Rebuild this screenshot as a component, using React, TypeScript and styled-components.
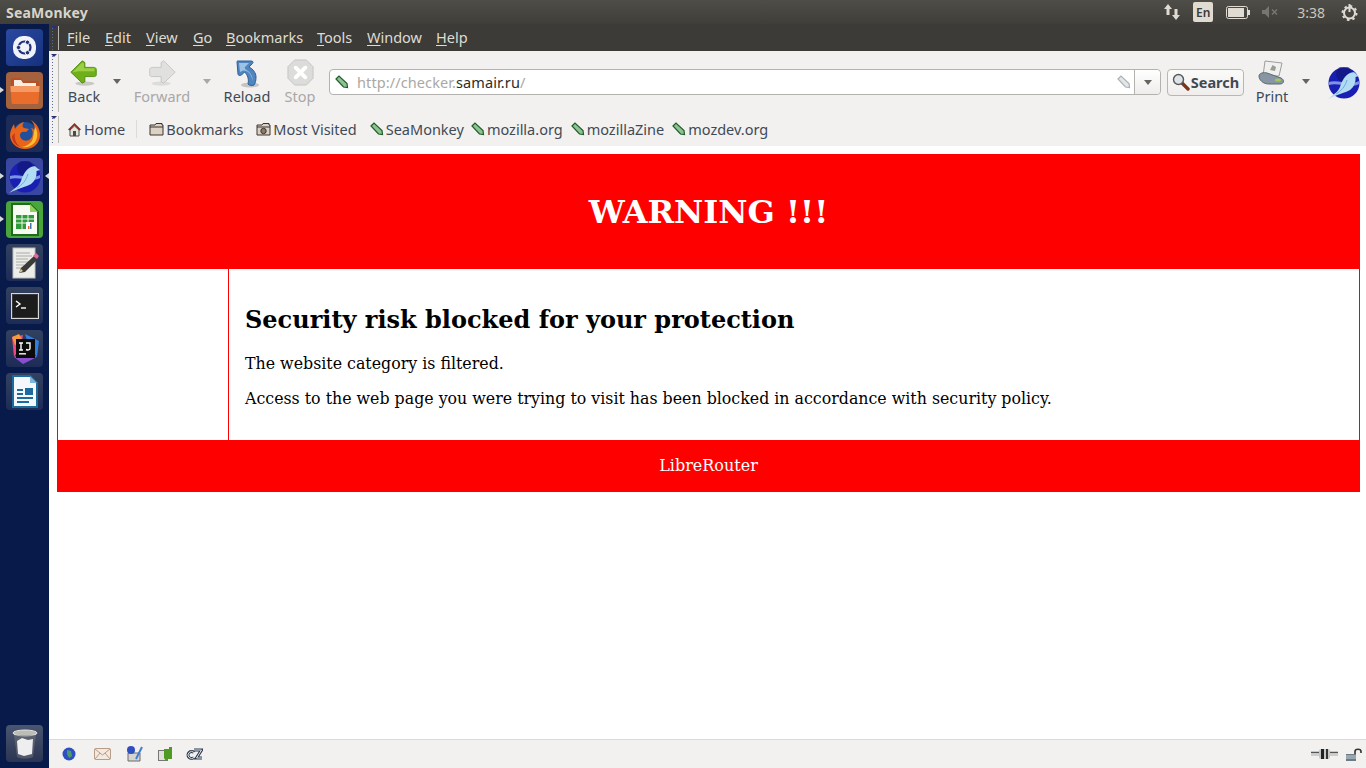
import React from "react";
import styled, { createGlobalStyle } from "styled-components";

const UI_FONT = `"Noto Sans", "Open Sans", sans-serif`;

const Global = createGlobalStyle`
  html, body { margin: 0; padding: 0; height: 100%; overflow: hidden; background: #fff; }
  #root { height: 768px; }
`;

const Screen = styled.div`
  width: 1366px;
  height: 768px;
  display: flex;
  flex-direction: column;
  font-family: ${UI_FONT};
`;
const Panel = styled.div`
  height: 24px;
  flex: none;
  display: flex;
  align-items: center;
  justify-content: space-between;
  background: linear-gradient(#4f4d47, #3f3e39);
  color: #dfdbd2;
`;
const WindowTitle = styled.span`
  margin-left: 6px;
  font-size: 14px;
  font-weight: 700;
  letter-spacing: 0.2px;
  color: #d8d4cb;
`;
const Indicators = styled.div`
  display: flex;
  align-items: center;
  padding-right: 8px;
`;
const LangBadge = styled.span`
  width: 20px;
  height: 20px;
  margin: 0 13px 0 12px;
  background: #dfdbd2;
  border-radius: 2px;
  color: #3c3b37;
  font-size: 12px;
  font-weight: 600;
  display: flex;
  align-items: center;
  justify-content: center;
`;
const Clock = styled.span`
  margin: 0 16px 0 17px;
  font-size: 14px;
  color: #c9c6bd;
`;
const MuteSlot = styled.span`
  display: flex;
  margin-left: 12px;
`;
const Body = styled.div`
  flex: 1;
  display: flex;
  min-height: 0;
`;
const Launcher = styled.div`
  width: 49px;
  flex: none;
  background: #071a49;
  padding-top: 5px;
  padding-bottom: 6px;
  box-sizing: border-box;
  display: flex;
  flex-direction: column;
  align-items: flex-start;
  gap: 6px;
`;
const Tile = styled.div<{ $bg: string; $running?: boolean; $active?: boolean }>`
  width: 37px;
  height: 37px;
  margin-left: 6px;
  border-radius: 4px;
  background: ${(p) => p.$bg};
  display: flex;
  align-items: center;
  justify-content: center;
  position: relative;
  flex: none;
  ${(p) =>
    p.$running &&
    `&::before { content: ""; position: absolute; left: -6px; top: 15px; border: 3px solid transparent; border-left: 4px solid #d9d9d9; }`}
  ${(p) =>
    p.$active &&
    `&::after { content: ""; position: absolute; right: -6px; top: 15px; border: 3px solid transparent; border-right: 4px solid #d9d9d9; }`}
`;
const LauncherSpacer = styled.div`
  flex: 1;
`;
const Browser = styled.div`
  flex: 1;
  display: flex;
  flex-direction: column;
  min-width: 0;
`;
const MenuBar = styled.div`
  height: 27px;
  flex: none;
  display: flex;
  align-items: center;
  background: #3c3b37;
  color: #dfdbd2;
  font-size: 14.5px;
`;
const Grip = styled.div<{ $h: number }>`
  width: 8px;
  height: ${(p) => p.$h}px;
  margin-left: 2px;
  flex: none;
  box-sizing: border-box;
  border-right: 1px solid #bbb9b4;
  background-image: radial-gradient(circle, #5c6a9a 0.7px, transparent 0.8px);
  background-size: 3px 3px;
  background-position: 0 4px;
  background-repeat: repeat-y;
  position: relative;
  &::before {
    content: "";
    position: absolute;
    left: 0;
    top: 0;
    border: 3px solid transparent;
    border-top: 3px solid #2b2f7a;
  }
`;
const MenuItem = styled.span<{ $w: number }>`
  width: ${(p) => p.$w}px;
  flex: none;
  & u {
    text-underline-offset: 2px;
  }
`;
const MenuList = styled.div`
  display: flex;
  margin-left: 8px;
  margin-top: -1px;
`;
const Chrome = styled.div`
  flex: none;
  background: #f2f1f0;
  color: #3c3b37;
`;
const NavBar = styled.div`
  height: 64px;
  display: flex;
  align-items: center;
`;
const ToolButton = styled.div<{ $w: number; $off?: boolean; $gap?: number }>`
  width: ${(p) => p.$w}px;
  margin-left: ${(p) => p.$gap ?? 0}px;
  margin-top: -2px;
  flex: none;
  height: 46px;
  display: flex;
  flex-direction: column;
  align-items: center;
  justify-content: space-between;
  font-size: 14.5px;
  line-height: 17px;
  color: ${(p) => (p.$off ? "#a9a8a6" : "#3f4a56")};
`;
const DropArrow = styled.span<{ $off?: boolean; $gap: number }>`
  width: 12px;
  margin-left: ${(p) => p.$gap}px;
  flex: none;
  display: flex;
  justify-content: center;
  &::after {
    content: "";
    border: 4px solid transparent;
    border-top: 5px solid ${(p) => (p.$off ? "#a8a8a8" : "#66645f")};
    margin-top: 1px;
  }
`;
const UrlBar = styled.div`
  width: 832px;
  height: 26px;
  margin-left: 4px;
  margin-top: -2px;
  flex: none;
  box-sizing: border-box;
  display: flex;
  align-items: center;
  padding-left: 5px;
  background: #fff;
  border: 1px solid #b4b2ae;
  border-radius: 4px;
  font-size: 14.5px;
`;
const UrlText = styled.span`
  flex: 1;
  margin-left: 8px;
  letter-spacing: 0.1px;
  color: #aaa8a4;
  & b {
    font-weight: 400;
    color: #2d2c2a;
  }
`;
const UrlDrop = styled.span`
  width: 25px;
  height: 24px;
  border-left: 1px solid #b4b2ae;
  margin-left: 3px;
  display: flex;
  align-items: center;
  justify-content: center;
  background: linear-gradient(#fff, #eeedeb);
  border-radius: 0 4px 4px 0;
  &::after {
    content: "";
    border: 4px solid transparent;
    border-top: 5px solid #66645f;
    margin-top: 5px;
  }
`;
const SearchButton = styled.div`
  width: 77px;
  height: 27px;
  margin-left: 6px;
  margin-top: -1px;
  padding-bottom: 1px;
  flex: none;
  box-sizing: border-box;
  display: flex;
  align-items: center;
  justify-content: center;
  gap: 1px;
  border: 1px solid #b9b7b2;
  border-radius: 4px;
  background: linear-gradient(#fbfbfa, #efeeec);
  font-size: 14.5px;
  font-weight: 700;
  color: #3f4a56;
`;
const LogoSlot = styled.span`
  margin-left: 16px;
  display: flex;
  margin-top: -1px;
`;
const BookmarkBar = styled.div`
  height: 31px;
  box-sizing: border-box;
  padding-bottom: 3px;
  display: flex;
  align-items: center;
  font-size: 14.5px;
  color: #3f4a56;
`;
const Bookmark = styled.span<{ $gap?: number }>`
  display: flex;
  align-items: center;
  gap: 2px;
  margin-left: ${(p) => p.$gap ?? 0}px;
  white-space: nowrap;
`;
const BarSeparator = styled.span`
  width: 1px;
  height: 18px;
  background: #dcdbd8;
  margin: 0 12px 0 11px;
`;
const PageArea = styled.div`
  flex: 1;
  min-height: 0;
  background: #fff;
  padding: 8px 6px 0 8px;
  font-family: "DejaVu Serif", serif;
`;
const Banner = styled.div`
  height: 115px;
  background: #f00;
  color: #fff;
  display: flex;
  align-items: center;
  justify-content: center;
  font-size: 32px;
  font-weight: 700;
`;
const Middle = styled.div`
  height: 171px;
  display: flex;
  box-sizing: border-box;
  border-left: 1px solid #f00;
  border-right: 1px solid #f00;
`;
const SideCell = styled.div`
  width: 170px;
  flex: none;
  border-right: 1px solid #f00;
`;
const Message = styled.div`
  padding: 34px 16px 0;
  color: #000;
`;
const Heading = styled.h2`
  margin: 0 0 17px;
  font-size: 24px;
  line-height: 34px;
  font-weight: 700;
`;
const Para = styled.p`
  margin: 0 0 16px;
  font-size: 15.82px;
  line-height: 19px;
`;
const Footer = styled.div`
  height: 52px;
  box-sizing: border-box;
  padding-bottom: 2px;
  background: #f00;
  color: #fff;
  font-size: 16px;
  display: flex;
  align-items: center;
  justify-content: center;
`;
const StatusBar = styled.div`
  height: 29px;
  flex: none;
  box-sizing: border-box;
  background: #f2f1f0;
  border-top: 1px solid #dcdad6;
  display: flex;
  align-items: center;
  justify-content: space-between;
  padding: 0 4px 0 13px;
`;
const StatusGroup = styled.div<{ $gap: number }>`
  display: flex;
  align-items: center;
  gap: ${(p) => p.$gap}px;
`;
const StatusSlot = styled.span<{ $w: number }>`
  width: ${(p) => p.$w}px;
  display: flex;
  align-items: center;
`;

const Pin = () => (
  <svg width="14" height="14" viewBox="0 0 14 14">
    <path d="M1 4 4 1 12 8.5 12.5 12.5 8.5 12Z" fill="#8fc492" stroke="#1f5c2a" strokeWidth="1.2" />
  </svg>
);
const GreyTag = () => (
  <svg width="14" height="14" viewBox="0 0 14 14">
    <path d="M1 4 4 1 12 8.5 12.5 12.5 8.5 12Z" fill="#e6e6e6" stroke="#a9b2ba" strokeWidth="1.2" />
  </svg>
);
const HomeIcon = () => (
  <svg width="15" height="15" viewBox="0 0 15 15">
    <path d="M7.5 1 1 7.5 2.5 8.5 7.5 3.5 12.5 8.5 14 7.5Z" fill="#8c2f22" />
    <path d="M3 8 7.5 4 12 8V14H3Z" fill="#e8e4dc" stroke="#4b4a46" />
    <rect x="6" y="9" width="3" height="5" fill="#4b4a46" />
  </svg>
);
const FolderIcon = ({ camera }: { camera?: boolean }) => (
  <svg width="15" height="14" viewBox="0 0 15 14">
    <path d="M1 3H6L7 1.5H13V3H14V13H1Z" fill="#dcd2c4" stroke="#3b3530" />
    <path d="M1 5H14" stroke="#3b3530" />
    {camera && <circle cx="7.5" cy="9" r="2.7" fill="#8a7b6c" stroke="#3b3530" />}
  </svg>
);
const BackArrow = () => (
  <svg width="28" height="29" viewBox="0 0 32 33">
    <ellipse cx="17" cy="28" rx="11" ry="2.5" fill="#c9c8c5" />
    <path d="M1 15 14 2 17 4V9.5H27C29 9.5 30 10.5 30 12V18C30 19.5 29 20 27 20H17V26L14 27.5Z" fill="#6fb01a" stroke="#4c8a0c" />
    <path d="M3 15 14 4 16 5V10.5H28V14H10Z" fill="#9bd045" />
  </svg>
);
const ForwardArrow = () => (
  <svg width="28" height="29" viewBox="0 0 32 33">
    <ellipse cx="15" cy="28" rx="11" ry="2.5" fill="#dddcda" />
    <path d="M31 15 18 2 15 4V9.5H5C3 9.5 2 10.5 2 12V18C2 19.5 3 20 5 20H15V26L18 27.5Z" fill="#e0e0df" stroke="#c2c2c1" />
  </svg>
);
const ReloadIcon = () => (
  <svg width="26" height="29" viewBox="0 0 26 29">
    <ellipse cx="16" cy="26" rx="9" ry="2.5" fill="#c4c3c0" />
    <path d="M3.5 2H17.5C19 2 19.5 3.5 18.5 4.5L15 8C19 10 22 14 22 18 22 21 21.5 24 20 26 17.5 27 15.5 26.5 14 25 15 21 14 16 10.5 13L7.5 16C6 17 4 16.5 4 15L3 3C3 2.5 3 2 3.5 2Z" fill="#4f86c0" stroke="#2e5f96" />
    <path d="M5 4H15L11 8C10 9.5 12 10.5 14 12 17 14.5 19 18 18.5 22 18 16 14 11 9 11.5L6 13Z" fill="#9cc3e6" />
  </svg>
);
const StopIcon = () => (
  <svg width="27" height="27" viewBox="0 0 28 28">
    <path d="M8 1H20L27 8V20L20 27H8L1 20V8Z" fill="#dcdcdb" stroke="#c4c4c3" />
    <path d="M9 9 19 19M19 9 9 19" stroke="#fff" strokeWidth="4" strokeLinecap="round" />
  </svg>
);
const Magnifier = () => (
  <svg width="18" height="18" viewBox="0 0 18 18">
    <path d="M9 9 16 16" stroke="#7c3418" strokeWidth="3.4" strokeLinecap="round" />
    <circle cx="6.5" cy="6.5" r="5" fill="#dfe3e6" stroke="#55585c" strokeWidth="1.4" />
  </svg>
);
const PrintIcon = () => (
  <svg width="30" height="28" viewBox="0 0 30 28">
    <path d="M8 2 25 4 22 17H6Z" fill="#f0f0ee" stroke="#9d9d9b" />
    <path d="M13 11 15.5 6 19 8 18 12Z" fill="#9a9a98" />
    <path d="M2 17C2 14 7 13 10 14L24 19C28 21 27 25 23 25H12C6 25 2 21 2 17Z" fill="#8896a3" stroke="#5e6973" />
    <ellipse cx="21" cy="21" rx="3" ry="1.5" fill="#9ccc55" />
  </svg>
);
const SeaMonkeyLogo = ({ size }: { size: number }) => (
  <svg width={size} height={size} viewBox="0 0 32 32">
    <circle cx="16" cy="16" r="15.5" fill="#1a1fb4" />
    <circle cx="16" cy="7" r="8" fill="#11156e" opacity="0.6" />
    <path d="M1 15C10 12 20 19 31 14V17C22 22 10 15 1 18Z" fill="#7d93e6" />
    <path d="M0 32C6 27 10 25 12 20 14 14 17 8 22 6 25 4.5 27 5 28 7L31 9 27.5 10C28 15 26 20 22 23 17 26 10 27 0 32Z" fill="#b2dcf4" />
    <path d="M8 27C13 24 17 20 19 13" fill="none" stroke="#6fa8d8" strokeWidth="1" />
  </svg>
);
const UbuntuLogo = () => (
  <svg width="27" height="27" viewBox="0 0 27 27">
    <rect x="2" y="2" width="23" height="23" rx="10" fill="#f1f3f8" />
    <circle cx="13.5" cy="13.5" r="6" fill="none" stroke="#1f3276" strokeWidth="2.2" />
    <circle cx="7.5" cy="13.5" r="2.2" fill="#1f3276" stroke="#f1f3f8" />
    <circle cx="16.5" cy="8.3" r="2.2" fill="#1f3276" stroke="#f1f3f8" />
    <circle cx="16.5" cy="18.7" r="2.2" fill="#1f3276" stroke="#f1f3f8" />
  </svg>
);
const FilesIcon = () => (
  <svg width="30" height="28" viewBox="0 0 30 28">
    <path d="M1 3C1 2 2 1 3 1H11L13 4H27C28 4 29 5 29 6V12H1Z" fill="#b94f22" />
    <path d="M4 3H11L13 6H26V10H4Z" fill="#f6efe6" />
    <path d="M0.5 9H29.5L28.5 25C28.5 26 28 27 27 27H3C2 27 1.5 26 1.5 25Z" fill="#ea6d2c" />
    <path d="M0.5 9H29.5L29.2 15H0.8Z" fill="#f59a62" />
  </svg>
);
const FirefoxIcon = () => (
  <svg width="32" height="32" viewBox="0 0 32 32">
    <circle cx="16" cy="16" r="12" fill="#20509c" />
    <path d="M22 2C27 5 31 10 31 17 31 25 25 31 16 31 8 31 1 25 1 17 1 13 3 9 5 6L6 11C8 8 11 5 15 4 13 7 13 9 15 10L20 11 17 14C14 13 11 14 11 17 11 21 15 24 20 22 24 20 25 14 22 10 24 10 25 12 26 13 26 9 25 5 22 2Z" fill="#e8641b" />
    <path d="M26 9C29 13 29 20 26 24 23 28 18 30 13 29 18 28 23 25 24 20 25 16 25 12 26 9Z" fill="#fbc02d" />
    <path d="M3 18C3 23 6 27 11 29 7 25 5 21 6 15Z" fill="#c9361a" />
  </svg>
);
const CalcIcon = () => (
  <svg width="29" height="33" viewBox="0 0 29 33">
    <path d="M2 1H20L28 9V32H2Z" fill="#f7fbf2" stroke="#1f6b1c" strokeWidth="2" />
    <path d="M20 1V9H28Z" fill="#8fd05e" />
    <rect x="6" y="12" width="18" height="14" fill="#2f9b39" />
    <path d="M6 16H24M6 20H24M12 12V26M18 12V26" stroke="#f7fbf2" />
    <rect x="16" y="19" width="8" height="8" fill="#fff" />
    <rect x="18" y="23" width="1.5" height="3" fill="#e2682b" />
    <rect x="20" y="20" width="1.5" height="6" fill="#3c78c0" />
  </svg>
);
const EditorIcon = () => (
  <svg width="28" height="32" viewBox="0 0 28 32">
    <rect x="2" y="1" width="22" height="30" fill="#ececea" stroke="#bdbdb9" />
    <path d="M5 6H19M5 9H21M5 12H17M5 15H20M5 18H13M5 21H11" stroke="#aaaaa6" />
    <path d="M8 26 10 21 23 9 27 12 14 25Z" fill="#3a3a38" />
    <path d="M22 9 25 6 28 9 26 12Z" fill="#d96a9a" />
    <path d="M8 26 10 22 12 24Z" fill="#e6c98e" />
  </svg>
);
const TerminalIcon = () => (
  <svg width="28" height="26" viewBox="0 0 28 26">
    <rect x="0.5" y="0.5" width="27" height="25" fill="#3a3a3a" stroke="#d8d8d8" />
    <rect x="2" y="2" width="24" height="22" fill="#1c1c1c" />
    <path d="M5 8 9 11 5 14" fill="none" stroke="#fff" strokeWidth="1.4" />
    <path d="M10 15H15" stroke="#fff" strokeWidth="1.4" />
  </svg>
);
const IdeaIcon = () => (
  <svg width="32" height="32" viewBox="0 0 32 32">
    <path d="M3 4 14 2 12 14 5 24Z" fill="#f0477f" />
    <path d="M16 1 30 8 28 24 20 14Z" fill="#2f7fe0" />
    <path d="M5 24 14 31 28 24 18 16Z" fill="#8a4fd0" />
    <path d="M3 4 10 1 14 8 6 12Z" fill="#f59a3c" />
    <rect x="7" y="6" width="19" height="19" fill="#0b0b0b" />
    <path d="M10 10H14M12 10V17M10 17H14M17 10H21V15.5C21 17 19 17.5 17 16.5" fill="none" stroke="#fff" strokeWidth="1.4" />
    <rect x="10" y="20" width="7" height="1.6" fill="#dcdcdc" />
  </svg>
);
const WriterIcon = () => (
  <svg width="26" height="33" viewBox="0 0 26 33">
    <path d="M1 1H18L25 8V32H1Z" fill="#f4f8fc" stroke="#1d6b9d" strokeWidth="2" />
    <path d="M18 1V8H25Z" fill="#7fb4dc" />
    <path d="M5 15H11M5 19H11M5 23H21M5 27H17" stroke="#1d6b9d" strokeWidth="2" />
    <rect x="13" y="13" width="8" height="7" fill="#1d6b9d" />
  </svg>
);
const TrashIcon = () => (
  <svg width="26" height="30" viewBox="0 0 26 30">
    <ellipse cx="13" cy="4" rx="12" ry="3" fill="#bdbdb8" stroke="#e5e5e1" />
    <path d="M2 6 5 28C9 30 17 30 21 28L24 6Z" fill="#78787a" fillOpacity="0.5" />
    <path d="M5 12 10 9 16 11 21 10 20 25 12 27 6 25Z" fill="#eeeeee" />
  </svg>
);
const NetworkIcon = () => (
  <svg width="18" height="18" viewBox="0 0 18 18" fill="#dfdbd2">
    <path d="M5 1 9 6H6.5V12H3.5V6H1Z" />
    <path d="M13 17 9 12H11.5V6H14.5V12H17Z" />
  </svg>
);
const BatteryIcon = () => (
  <svg width="24" height="13" viewBox="0 0 24 13">
    <rect x="0.5" y="0.5" width="21" height="12" rx="2" fill="none" stroke="#dfdbd2" />
    <rect x="2" y="2" width="16" height="9" fill="#dfdbd2" />
    <rect x="22" y="4" width="2" height="5" fill="#dfdbd2" />
  </svg>
);
const MutedIcon = () => (
  <svg width="18" height="12" viewBox="0 0 18 12" fill="#77766f">
    <path d="M0 4H3L7 0V12L3 8H0Z" />
    <path d="M10 3.5 15 8.5M15 3.5 10 8.5" stroke="#77766f" strokeWidth="1.5" />
  </svg>
);
const GearIcon = () => (
  <svg width="17" height="18" viewBox="0 0 17 18">
    <circle cx="8.5" cy="10" r="5.5" fill="none" stroke="#dfdbd2" strokeWidth="2" />
    <circle cx="8.5" cy="10" r="7" fill="none" stroke="#dfdbd2" strokeWidth="2" strokeDasharray="2.5 3" />
    <path d="M8.5 1V9" stroke="#dfdbd2" strokeWidth="2" />
  </svg>
);
const StatusGlobe = () => (
  <svg width="14" height="14" viewBox="0 0 14 14">
    <circle cx="7" cy="7" r="6.5" fill="#2f4fc0" />
    <path d="M5 3 9 4 10 9 7 11 5 7Z" fill="#4f9a6a" />
  </svg>
);
const StatusMail = () => (
  <svg width="17" height="12" viewBox="0 0 17 12">
    <rect x="0.5" y="0.5" width="16" height="11" rx="1" fill="#f3e9de" stroke="#b79c87" />
    <path d="M1 1 8.5 7 16 1M1 11 6 5M16 11 11 5" fill="none" stroke="#b79c87" />
  </svg>
);
const StatusComposer = () => (
  <svg width="17" height="16" viewBox="0 0 17 16">
    <path d="M2 7H14V15H2Z" fill="#d5d5d2" stroke="#6a6a68" />
    <circle cx="5" cy="4" r="4" fill="#2f4fc0" />
    <path d="M16 1 10 13" stroke="#3f7fd0" strokeWidth="2" />
  </svg>
);
const StatusAddons = () => (
  <svg width="15" height="14" viewBox="0 0 15 14">
    <rect x="0.5" y="3.5" width="9" height="10" fill="#e0e0dc" stroke="#777" />
    <path d="M6 2H11V0H14V12H10L8 14 6 11Z" fill="#4f9a23" />
  </svg>
);
const StatusChat = () => (
  <svg width="17" height="12" viewBox="0 0 17 12">
    <path d="M8 4.5A3.5 3.500 0 1 0 8 9.500" fill="none" stroke="#2d3a4c" strokeWidth="3" />
    <path d="M8 2H15.500L10.500 10H16" fill="none" stroke="#2d3a4c" strokeWidth="3" />
    <path d="M8 4.500A3.500 3.500 0 1 0 8 9.500M8 2H15.500L10.500 10H16" fill="none" stroke="#e8ebee" strokeWidth="1" />
  </svg>
);
const PlugIcon = () => (
  <svg width="27" height="10" viewBox="0 0 27 10">
    <path d="M0 3.5H8M19 3.5H27" stroke="#555" strokeWidth="1.6" />
    <path d="M0 6H8M19 6H27" stroke="#aaa" />
    <rect x="8" y="0" width="11" height="10" rx="2" fill="#c8c8c8" />
    <rect x="10" y="0" width="3" height="10" fill="#222" />
    <rect x="15" y="0" width="2" height="10" fill="#333" />
  </svg>
);
const LockIcon = () => (
  <svg width="17" height="13" viewBox="0 0 17 13">
    <path d="M10 6V3.5C10 0.5 16 0.5 16 3.5V5" fill="none" stroke="#333" strokeWidth="1.6" />
    <rect x="1" y="6" width="10" height="7" fill="#6b7c86" />
    <path d="M1 8H11M1 10H11" stroke="#c9d2d8" />
  </svg>
);

const menus: [string, string, number][] = [
  ["F", "ile", 38],
  ["E", "dit", 41],
  ["V", "iew", 47],
  ["G", "o", 33],
  ["B", "ookmarks", 91],
  ["T", "ools", 50],
  ["W", "indow", 69],
  ["H", "elp", 40],
];
const links: [string, number][] = [
  ["SeaMonkey", 13],
  ["mozilla.org", 7],
  ["mozillaZine", 8],
  ["mozdev.org", 8],
];

export default function App() {
  return (
    <Screen>
      <Global />
      <Panel>
        <WindowTitle>SeaMonkey</WindowTitle>
        <Indicators>
          <NetworkIcon />
          <LangBadge>En</LangBadge>
          <BatteryIcon />
          <MuteSlot><MutedIcon /></MuteSlot>
          <Clock>3:38</Clock>
          <GearIcon />
        </Indicators>
      </Panel>
      <Body>
        <Launcher>
          <Tile $bg="linear-gradient(135deg,#2a4aa0,#16307e)"><UbuntuLogo /></Tile>
          <Tile $bg="#a5623f" $running><FilesIcon /></Tile>
          <Tile $bg="#1d2c56"><FirefoxIcon /></Tile>
          <Tile $bg="#3a47a0" $running $active><SeaMonkeyLogo size={32} /></Tile>
          <Tile $bg="#4aa63a" $running><CalcIcon /></Tile>
          <Tile $bg="linear-gradient(#33415f,#1d2c56)"><EditorIcon /></Tile>
          <Tile $bg="linear-gradient(#33415f,#1d2c56)"><TerminalIcon /></Tile>
          <Tile $bg="linear-gradient(#33415f,#1d2c56)"><IdeaIcon /></Tile>
          <Tile $bg="linear-gradient(#33415f,#1d2c56)"><WriterIcon /></Tile>
          <LauncherSpacer />
          <Tile $bg="linear-gradient(#4a5570,#2a3553)"><TrashIcon /></Tile>
        </Launcher>
        <Browser>
          <MenuBar>
            <Grip $h={24} />
            <MenuList>
              {menus.map(([key, rest, w]) => (
                <MenuItem key={key} $w={w}>
                  <u>{key}</u>
                  {rest}
                </MenuItem>
              ))}
            </MenuList>
          </MenuBar>
          <Chrome>
            <NavBar>
              <Grip $h={58} />
              <ToolButton $w={50}><BackArrow />Back</ToolButton>
              <DropArrow $gap={2} />
              <ToolButton $w={78} $off><ForwardArrow />Forward</ToolButton>
              <DropArrow $gap={0} $off />
              <ToolButton $w={50} $gap={9}><ReloadIcon />Reload</ToolButton>
              <ToolButton $w={50} $gap={3} $off><StopIcon />Stop</ToolButton>
              <UrlBar>
                <Pin />
                <UrlText>http://checker.<b>samair.ru</b>/</UrlText>
                <GreyTag />
                <UrlDrop />
              </UrlBar>
              <SearchButton><Magnifier />Search</SearchButton>
              <ToolButton $w={50} $gap={3}><PrintIcon />Print</ToolButton>
              <DropArrow $gap={3} />
              <LogoSlot><SeaMonkeyLogo size={32} /></LogoSlot>
            </NavBar>
            <BookmarkBar>
              <Grip $h={27} />
              <Bookmark $gap={8}><HomeIcon />Home</Bookmark>
              <BarSeparator />
              <Bookmark><FolderIcon />Bookmarks</Bookmark>
              <Bookmark $gap={13}><FolderIcon camera />Most Visited</Bookmark>
              {links.map(([name, gap]) => (
                <Bookmark key={name} $gap={gap}><Pin />{name}</Bookmark>
              ))}
            </BookmarkBar>
          </Chrome>
          <PageArea>
            <Banner>WARNING !!!</Banner>
            <Middle>
              <SideCell />
              <Message>
                <Heading>Security risk blocked for your protection</Heading>
                <Para>The website category is filtered.</Para>
                <Para>Access to the web page you were trying to visit has been blocked in accordance with security policy.</Para>
              </Message>
            </Middle>
            <Footer>LibreRouter</Footer>
          </PageArea>
          <StatusBar>
            <StatusGroup $gap={0}>
              <StatusSlot $w={32}><StatusGlobe /></StatusSlot>
              <StatusSlot $w={32}><StatusMail /></StatusSlot>
              <StatusSlot $w={32}><StatusComposer /></StatusSlot>
              <StatusSlot $w={28}><StatusAddons /></StatusSlot>
              <StatusSlot $w={17}><StatusChat /></StatusSlot>
            </StatusGroup>
            <StatusGroup $gap={7}>
              <PlugIcon />
              <LockIcon />
            </StatusGroup>
          </StatusBar>
        </Browser>
      </Body>
    </Screen>
  );
}
